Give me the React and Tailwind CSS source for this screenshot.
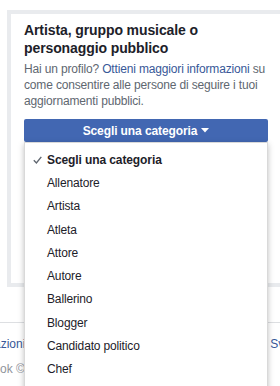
import React from 'react';

const categories = [
  'Allenatore',
  'Artista',
  'Atleta',
  'Attore',
  'Autore',
  'Ballerino',
  'Blogger',
  'Candidato politico',
  'Chef',
];

const App = () => {
  return (
    <div className="relative w-[280px] h-[386px] overflow-hidden bg-white font-['Liberation_Sans',Arial,sans-serif]">
      {/* card */}
      <div className="ml-[7px] mt-[10px] w-[290px] h-[277px] border-4 border-[#e9ebee] bg-white">
        <div className="w-[270px] pl-[13px] pt-[7px] pr-[12px]">
          <h2 className="w-[244px] text-[14px] leading-[18px] font-bold text-[#1d2129] tracking-[-0.1px]">
            Artista, gruppo musicale o personaggio pubblico
          </h2>
          <p className="mt-[4px] w-[246px] text-[12px] leading-[16px] text-[#606770] tracking-[-0.16px]">
            Hai un profilo? <span className="text-[#385898]">Ottieni maggiori informazioni</span> su come consentire alle persone di seguire i tuoi aggiornamenti pubblici.
          </p>
          <button className="mt-[10px] w-[244px] h-[23px] flex items-center justify-center gap-[4px] rounded-[2px] bg-[#4267b2] text-white text-[12px] font-bold tracking-[-0.1px]">
            Scegli una categoria
            <svg width="8" height="5" viewBox="0 0 8 5">
              <path d="M0 0h8L4 4.5z" fill="#fff" />
            </svg>
          </button>
        </div>
      </div>

      {/* footer */}
      <div className="mt-[35px] border-t border-[#dddfe2]">
        <div className="flex justify-between pt-[13px] text-[12px] leading-[16px] text-[#385898]">
          <span className="ml-[-40px]">Informazioni</span>
          <span className="mr-[-53px]">Sviluppatori</span>
        </div>
        <div className="mt-[10px] ml-[-40px] text-[12px] leading-[14px] text-[#90949c]">Facebook © 2019</div>
      </div>

      {/* open select menu */}
      <div className="absolute left-[24px] top-[142px] w-[244px] h-[260px] bg-white border border-[rgba(0,0,0,0.15)] shadow-[0_2px_6px_rgba(0,0,0,0.25)] pt-[5px]">
        <div className="relative h-[23.3px] flex items-center pl-[22px] text-[12px] font-bold text-[#1d2129] tracking-[-0.1px]">
          <svg className="absolute left-[8px] top-[8px]" width="9" height="8" viewBox="0 0 9 8">
            <path d="M0.8 4.3l2.6 2.6L8.3 0.9" fill="none" stroke="#606770" strokeWidth="1.4" />
          </svg>
          Scegli una categoria
        </div>
        {categories.map((c) => (
          <div key={c} className="h-[23.3px] flex items-center pl-[22px] text-[12px] text-[#1d2129] tracking-[-0.15px]">
            {c}
          </div>
        ))}
      </div>
    </div>
  );
};

export default App;
